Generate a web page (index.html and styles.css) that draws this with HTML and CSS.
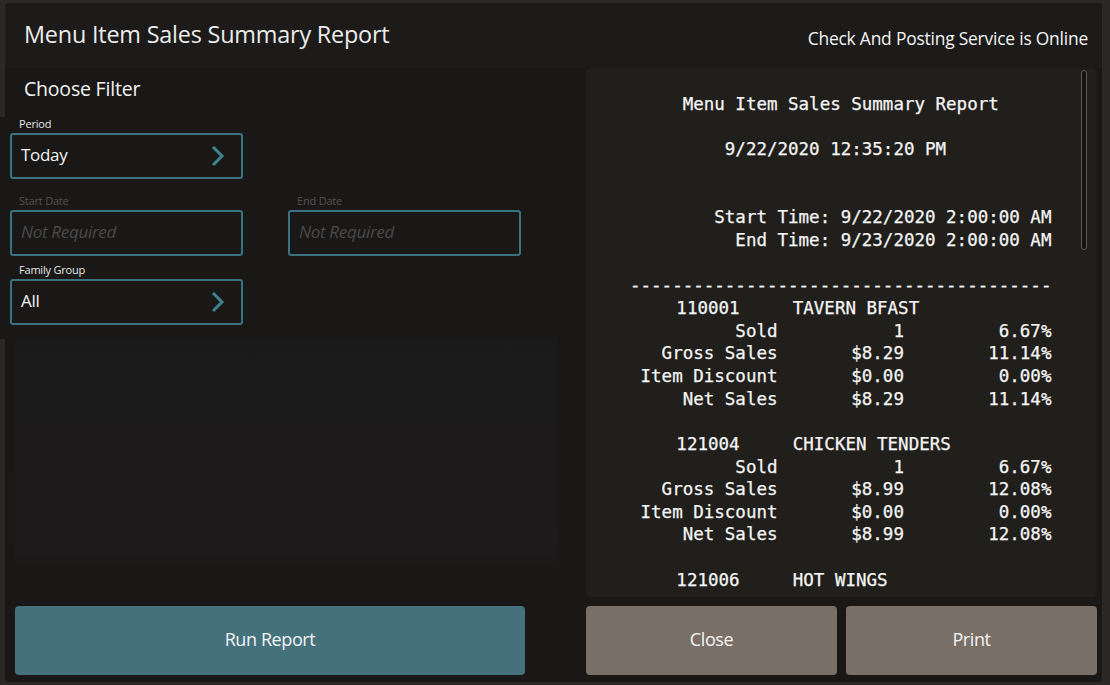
FILE: index.html
```html
<!DOCTYPE html>
<html>
<head>
<meta charset="utf-8">
<link rel="stylesheet" href="styles.css">
</head>
<body>
<div class="window">
  <header class="header">
    <h1 class="title">Menu Item Sales Summary Report</h1>
    <div class="status">Check And Posting Service is Online</div>
  </header>
  <div class="body">
    <section class="filters">
      <h2 class="filter-title">Choose Filter</h2>
      <div class="fields">
        <div class="field">
          <div class="label">Period</div>
          <div class="box">
            <span class="value">Today</span>
            <svg class="chev" width="16" height="22" viewBox="0 0 16 22"><path d="M3 2 L12 11 L3 20" fill="none" stroke="#3f8291" stroke-width="3"/></svg>
          </div>
        </div>
        <div class="row2">
          <div class="field">
            <div class="label dim">Start Date</div>
            <div class="box"><span class="placeholder">Not Required</span></div>
          </div>
          <div class="field">
            <div class="label dim">End Date</div>
            <div class="box"><span class="placeholder">Not Required</span></div>
          </div>
        </div>
        <div class="field tight">
          <div class="label">Family Group</div>
          <div class="box">
            <span class="value">All</span>
            <svg class="chev" width="16" height="22" viewBox="0 0 16 22"><path d="M3 2 L12 11 L3 20" fill="none" stroke="#3f8291" stroke-width="3"/></svg>
          </div>
        </div>
      </div>
      <div class="lower"></div>
    </section>
    <section class="report">
      <div class="scrollbar"></div>
      <div class="receipt">
        <div class="ln">     Menu Item Sales Summary Report</div>
        <div class="ln"> </div>
        <div class="ln">         9/22/2020 12:35:20 PM</div>
        <div class="ln"> </div>
        <div class="ln"> </div>
        <div class="ln">        Start Time: 9/22/2020 2:00:00 AM</div>
        <div class="ln">          End Time: 9/23/2020 2:00:00 AM</div>
        <div class="ln"> </div>
        <div class="ln">----------------------------------------</div>
        <div class="item"><span class="code">110001</span><span class="name">TAVERN BFAST</span></div>
        <div class="stat"><span>Sold</span><span>1</span><span>6.67%</span></div>
        <div class="stat"><span>Gross Sales</span><span>$8.29</span><span>11.14%</span></div>
        <div class="stat"><span>Item Discount</span><span>$0.00</span><span>0.00%</span></div>
        <div class="stat"><span>Net Sales</span><span>$8.29</span><span>11.14%</span></div>
        <div class="ln"> </div>
        <div class="item"><span class="code">121004</span><span class="name">CHICKEN TENDERS</span></div>
        <div class="stat"><span>Sold</span><span>1</span><span>6.67%</span></div>
        <div class="stat"><span>Gross Sales</span><span>$8.99</span><span>12.08%</span></div>
        <div class="stat"><span>Item Discount</span><span>$0.00</span><span>0.00%</span></div>
        <div class="stat"><span>Net Sales</span><span>$8.99</span><span>12.08%</span></div>
        <div class="ln"> </div>
        <div class="item"><span class="code">121006</span><span class="name">HOT WINGS</span></div>
      </div>
    </section>
    <div class="actions-left">
      <button class="btn run">Run Report</button>
    </div>
    <div class="actions-right">
      <button class="btn grey">Close</button>
      <button class="btn grey">Print</button>
    </div>
  </div>
</div>
</body>
</html>
```

FILE: styles.css
```css
* { box-sizing: border-box; }
html, body { margin: 0; padding: 0; }
body {
  width: 1110px;
  height: 685px;
  overflow: hidden;
  background: #2b2926;
  font-family: "Open Sans", "Noto Sans", sans-serif;
  color: #f2f2f2;
  padding: 3px 8px 3px 5px;
}
.window {
  height: 679px;
  background: #191817;
  border-radius: 4px;
  display: flex;
  flex-direction: column;
}
.header {
  height: 65px;
  flex: none;
  display: flex;
  align-items: center;
  justify-content: space-between;
  padding: 0 14px 0 19px;
  background: #1c1b1a;
  border-radius: 4px 4px 0 0;
}
.title {
  margin: 0 0 4px 0;
  font-size: 23.4px;
  font-weight: 400;
  letter-spacing: -0.2px;
  color: #ececec;
}
.status {
  font-size: 17.4px;
  letter-spacing: -0.2px;
  color: #f4f4f4;
  margin-top: 5px;
}
.body {
  flex: 1;
  display: grid;
  grid-template-columns: 1fr 511px;
  grid-template-rows: 1fr 69px;
  column-gap: 26px;
  row-gap: 9px;
  padding: 0 5px 7px 0;
  min-height: 0;
}
.filters {
  display: flex;
  flex-direction: column;
  min-height: 0;
}
.filter-title {
  margin: 9px 0 0 19px;
  font-size: 19.5px;
  line-height: 24px;
  font-weight: 400;
  letter-spacing: -0.2px;
  color: #f4f4f4;
}
.fields {
  margin: 16px 0 0 -5px;
  padding: 0 0 14px 10px;
  background: #191817;
  width: 530px;
}
.field { width: 233px; }
.row2 {
  display: grid;
  grid-template-columns: 233px 233px;
  column-gap: 45px;
  margin-top: 15px;
}
.field.tight { margin-top: 7px; }
.label {
  font-size: 11px;
  line-height: 14px;
  margin: 0 0 2px 9px;
  color: #e6e6e6;
  letter-spacing: -0.2px;
}
.label.dim { color: #555350; }
.box {
  height: 46px;
  border: 2px solid #3b7280;
  border-radius: 3px;
  display: flex;
  align-items: center;
  justify-content: space-between;
  padding: 0 15px 4px 9px;
}
.chev { margin-top: 4px; }
.value {
  font-size: 17px;
  color: #f4f4f4;
  letter-spacing: -0.3px;
}
.placeholder {
  font-size: 17px;
  font-style: italic;
  color: #4b4a48;
  letter-spacing: -0.3px;
}
.chev { display: block; }
.lower {
  flex: 1;
  margin: 0 2px 22px 10px;
  background: linear-gradient(#1b1a1a, #1c1a1a 88%, #181716);
}
.report {
  position: relative;
  background: #211f1c;
  border-radius: 5px;
  overflow: hidden;
  padding: 25px 0 0 44px;
}
.scrollbar {
  position: absolute;
  top: 2px;
  right: 10px;
  width: 6px;
  height: 180px;
  border: 1px solid #5a5854;
  border-radius: 3px;
  background: #141312;
}
.receipt {
  font-family: "DejaVu Sans Mono", "Liberation Mono", monospace;
  font-size: 17.5px;
  line-height: 22.67px;
  color: #f6f6f6;
  width: 40ch;
  -webkit-text-stroke: 0.25px #f6f6f6;
}
.ln { white-space: pre; height: 22.67px; }
.item { display: flex; white-space: pre; height: 22.67px; }
.item .code { width: 11ch; padding-left: 4.4ch; box-sizing: content-box; }
.item .name { margin-left: 0.05ch; }
.stat {
  display: grid;
  grid-template-columns: 14ch 12ch 14ch;
  height: 22.67px;
  white-space: pre;
}
.stat span { text-align: right; }
.actions-left { padding-left: 10px; }
.actions-right {
  display: grid;
  grid-template-columns: 1fr 1fr;
  column-gap: 9px;
}
.btn {
  width: 100%;
  height: 69px;
  border: none;
  border-radius: 4px;
  font-family: "Open Sans", "Noto Sans", sans-serif;
  font-size: 18px;
  letter-spacing: -0.4px;
  color: #f4f4f4;
  padding: 0 0 4px 0;
}
.actions-left .btn { width: 510px; }
.run { background: #44717c; }
.grey { background: #7a6f66; }
```
